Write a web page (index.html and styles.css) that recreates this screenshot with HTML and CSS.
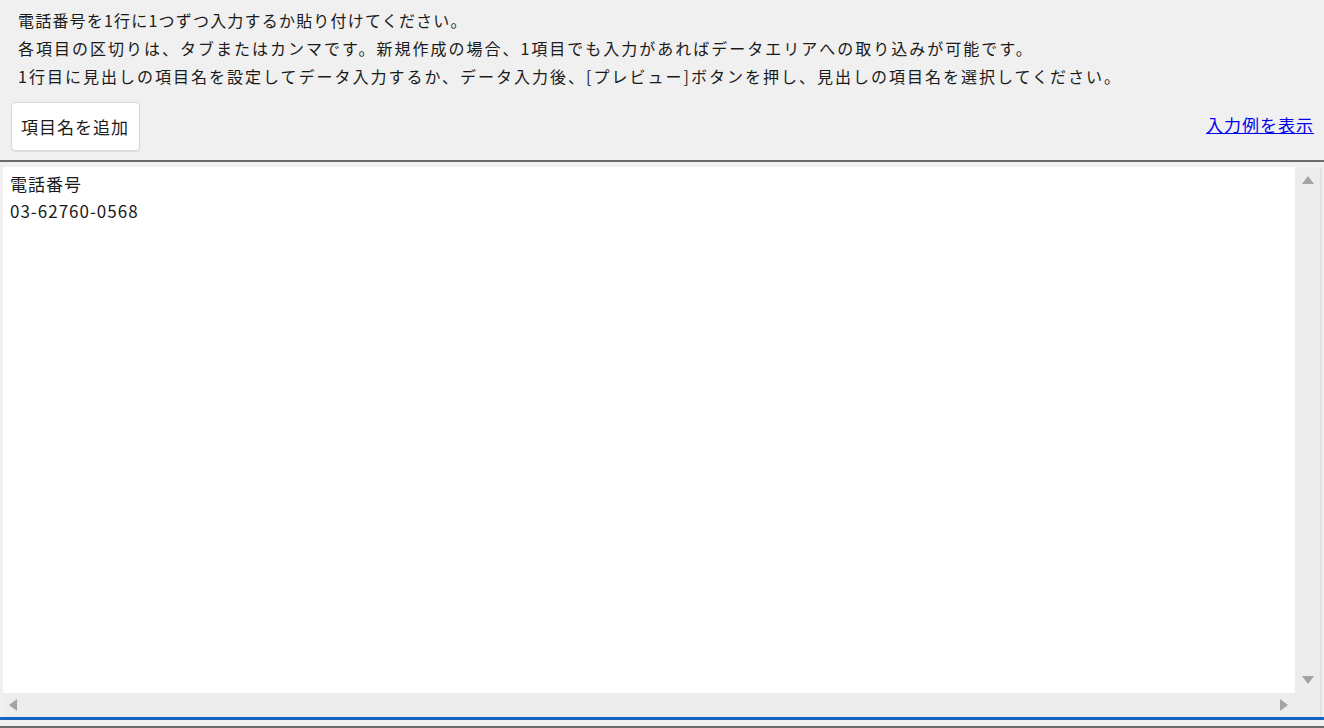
FILE: index.html
```html
<!DOCTYPE html>
<html lang="ja">
<head>
  <meta charset="UTF-8">
  <meta name="viewport" content="width=device-width, initial-scale=1.0">
  <link rel="stylesheet" href="styles.css">
  <title>データ入力</title>
</head>
<body>
  <div class="header">
    <div class="guide">
      <p>電話番号を1行に1つずつ入力するか貼り付けてください。</p>
      <p>各項目の区切りは、タブまたはカンマです。新規作成の場合、1項目でも入力があればデータエリアへの取り込みが可能です。</p>
      <p>1行目に見出しの項目名を設定してデータ入力するか、データ入力後、[プレビュー]ボタンを押し、見出しの項目名を選択してください。</p>
    </div>
    <div class="toolbar">
      <button type="button" class="btn">項目名を追加</button>
      <a href="#" class="sample-link">入力例を表示</a>
    </div>
  </div>

  <div class="editor-wrap">
    <div class="editor">
      <div class="editor-text">
        <div class="line">電話番号</div>
        <div class="line">03-62760-0568</div>
      </div>
      <div class="vbar">
        <span class="arrow up"></span>
        <span class="arrow down"></span>
      </div>
      <div class="hbar">
        <span class="arrow left"></span>
        <span class="arrow right"></span>
      </div>
      <div class="corner"></div>
    </div>
  </div>
  <div class="status-line"></div>
</body>
</html>
```

FILE: styles.css
```css
* {
  margin: 0;
  padding: 0;
  box-sizing: border-box;
}

html, body {
  height: 100%;
}

body {
  background-color: #f0f0f0;
  color: #1a1a1a;
  font-family: "Noto Sans CJK JP", "Noto Sans", sans-serif;
  font-size: 17px;
  letter-spacing: 1px;
  display: flex;
  flex-direction: column;
  overflow: hidden;
}

.header {
  border-bottom: 2px solid #6a6a6a;
  padding-bottom: 9px;
}

.guide {
  padding: 6px 0 0 18px;
  line-height: 28px;
  font-size: 16px;
  letter-spacing: 2px;
}

.guide p:first-child {
  letter-spacing: 1.2px;
}

.toolbar {
  display: flex;
  align-items: center;
  justify-content: space-between;
  margin-top: 12px;
  padding: 0 10px 0 11px;
}

.btn {
  font-family: inherit;
  font-size: 17px;
  letter-spacing: 1px;
  color: #1a1a1a;
  height: 49px;
  padding: 0 10px 0 9px;
  background-color: #fff;
  border: 1px solid #d8d8d8;
  border-radius: 4px;
  box-shadow: 0 1px 1px rgba(0, 0, 0, 0.08);
}

.sample-link {
  color: #0000ee;
  text-decoration: underline;
  margin-bottom: 4px;
}

.editor-wrap {
  flex: 1;
  padding: 5px 2px 0 3px;
  display: flex;
}

.editor {
  flex: 1;
  display: grid;
  grid-template-columns: 1fr 25px;
  grid-template-rows: 1fr 24px;
  border-right: 2px solid #e2e2e2;
}

.editor-text {
  background-color: #fff;
  padding: 3px 7px;
  line-height: 27px;
}

.vbar {
  background-color: #ededed;
  display: flex;
  flex-direction: column;
  justify-content: space-between;
  align-items: center;
  padding: 9px 0 9px 1px;
}

.hbar {
  background-color: #ededed;
  display: flex;
  justify-content: space-between;
  align-items: center;
  padding: 0 7px 0 6px;
}

.corner {
  background-color: #ededed;
}

.arrow {
  width: 0;
  height: 0;
  border-style: solid;
  border-color: transparent;
}

.arrow.up {
  border-width: 0 6px 8px 6px;
  border-bottom-color: #a3a3a3;
}

.arrow.down {
  border-width: 8px 6px 0 6px;
  border-top-color: #a3a3a3;
}

.arrow.left {
  border-width: 6px 8px 6px 0;
  border-right-color: #a3a3a3;
}

.arrow.right {
  border-width: 6px 0 6px 8px;
  border-left-color: #a3a3a3;
}

.status-line {
  height: 11px;
  border-top: 3px solid #1565c0;
  border-bottom: 2px solid #6a6a6a;
  background-color: #f0f0f0;
}
```
